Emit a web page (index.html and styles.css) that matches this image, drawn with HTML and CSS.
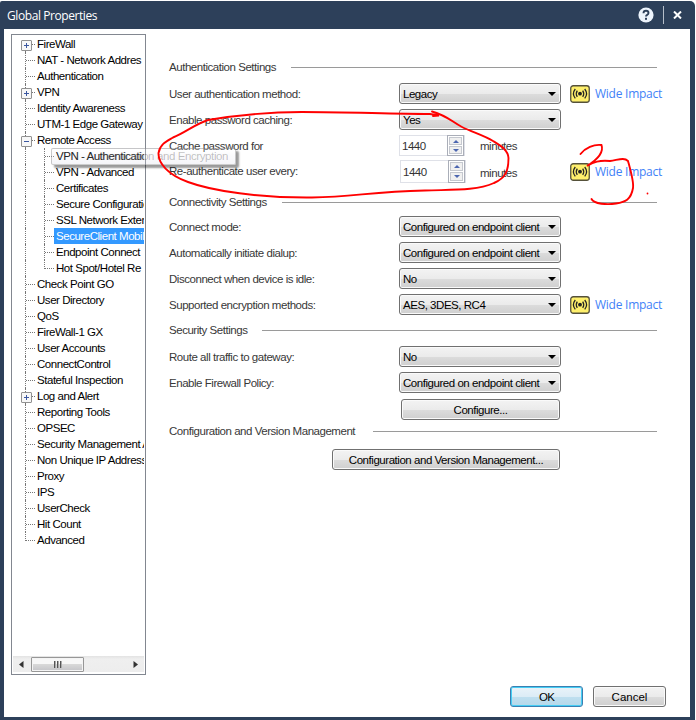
FILE: index.html
```
<!DOCTYPE html>
<html lang="en">
<head>
<meta charset="utf-8">
<title>Global Properties</title>
<link rel="stylesheet" href="styles.css">
</head>
<body>
<svg width="0" height="0" class="defs">
  <symbol id="wide" viewBox="0 0 20 18">
    <rect x=".75" y=".75" width="18.5" height="16.5" rx="2.5" fill="#fff06c" stroke="#55513a" stroke-width="1.3"/>
    <circle cx="10" cy="8.7" r="1.9" fill="#222"/>
    <path d="M7.3 5.6Q5.2 8.7 7.3 11.8M12.700 5.600Q14.800 8.700 12.700 11.800M5.300 4Q1.600 8.700 5.300 13.400M14.700 4Q18.400 8.700 14.700 13.400" fill="none" stroke="#222" stroke-width="1.25"/>
  </symbol>
</svg>
<div class="window">
  <header class="titlebar">
    <span class="title">Global Properties</span>
    <svg class="help" width="16" height="16" viewBox="0 0 16 16"><circle cx="8" cy="8" r="7.6" fill="#edf4fc"/><path d="M5.500 6.200Q5.500 3.800 8 3.800T10.500 6Q10.500 7.200 9.200 7.800Q8 8.400 8 9.600" fill="none" stroke="#2d405a" stroke-width="1.9"/><rect x="7" y="10.8" width="2" height="2" fill="#2d405a"/></svg>
    <span class="divider"></span>
    <svg class="close" width="9" height="8" viewBox="0 0 9 8"><path d="M1 .5L8 7.500M8 .5L1 7.500" stroke="#fff" stroke-width="2"/></svg>
  </header>
  <div class="body">
    <main class="content">
      <nav class="tree">
        <ul class="list">
          <li class="exp plus first">FireWall</li>
          <li>NAT - Network Addres</li>
          <li>Authentication</li>
          <li class="exp plus">VPN</li>
          <li>Identity Awareness</li>
          <li>UTM-1 Edge Gateway</li>
          <li class="exp">Remote Access</li>
          <li class="sub">VPN - Authentication</li>
          <li class="sub">VPN - Advanced</li>
          <li class="sub">Certificates</li>
          <li class="sub">Secure Configuration</li>
          <li class="sub">SSL Network Extender</li>
          <li class="sub selected"><span>SecureClient Mobile</span></li>
          <li class="sub">Endpoint Connect</li>
          <li class="sub end">Hot Spot/Hotel Re</li>
          <li>Check Point GO</li>
          <li>User Directory</li>
          <li>QoS</li>
          <li>FireWall-1 GX</li>
          <li>User Accounts</li>
          <li>ConnectControl</li>
          <li>Stateful Inspection</li>
          <li class="exp plus">Log and Alert</li>
          <li>Reporting Tools</li>
          <li>OPSEC</li>
          <li>Security Management A</li>
          <li>Non Unique IP Address</li>
          <li>Proxy</li>
          <li>IPS</li>
          <li>UserCheck</li>
          <li>Hit Count</li>
          <li class="last">Advanced</li>
        </ul>
        <div class="scrollbar">
          <svg width="5" height="7" viewBox="0 0 5 7"><path d="M4.500 0V7L0 3.500Z" fill="#333"/></svg>
          <span class="thumb"><i></i><i></i><i></i></span>
          <svg class="right" width="5" height="7" viewBox="0 0 5 7"><path d="M.5 0V7L5 3.500Z" fill="#333"/></svg>
        </div>
      </nav>
      <section class="form">
        <h2>Authentication Settings</h2>
        <div class="row"><label>User authentication method:</label><span class="select">Legacy</span><span class="impact"><svg width="20" height="18"><use href="#wide"/></svg>Wide Impact</span></div>
        <div class="row"><label>Enable password caching:</label><span class="select">Yes</span></div>
        <div class="row"><label>Cache password for</label><span class="spin">1440<span class="arrows"><b></b><b class="down"></b></span></span><span class="unit">minutes</span></div>
        <div class="row tall"><label>Re-authenticate user every:</label><span class="spin">1440<span class="arrows"><b></b><b class="down"></b></span></span><span class="unit">minutes</span><span class="impact"><svg width="20" height="18"><use href="#wide"/></svg>Wide Impact</span></div>
        <h2 class="h-conn">Connectivity Settings</h2>
        <div class="row"><label>Connect mode:</label><span class="select">Configured on endpoint client</span></div>
        <div class="row"><label>Automatically initiate dialup:</label><span class="select">Configured on endpoint client</span></div>
        <div class="row"><label>Disconnect when device is idle:</label><span class="select">No</span></div>
        <div class="row"><label>Supported encryption methods:</label><span class="select">AES, 3DES, RC4</span><span class="impact"><svg width="20" height="18"><use href="#wide"/></svg>Wide Impact</span></div>
        <h2 class="h-sec">Security Settings</h2>
        <div class="row"><label>Route all traffic to gateway:</label><span class="select">No</span></div>
        <div class="row"><label>Enable Firewall Policy:</label><span class="select">Configured on endpoint client</span></div>
        <div class="row right"><button class="configure">Configure...</button></div>
        <h2 class="h-conf">Configuration and Version Management</h2>
        <div class="row right"><button class="manage">Configuration and Version Management...</button></div>
      </section>
    </main>
    <footer class="footer"><button class="ok">OK</button><button>Cancel</button></footer>
  </div>
  <div class="tooltip">VPN - Authentication and Encryption</div>
  <svg class="ink" width="696" height="720" viewBox="0 0 696 720">
    <path d="M432 111.500C448 116 452 122 462 127S485 136 493 141S508 150 508.500 158C508.500 170 506 178 494 183C476 191 452 189.500 425 190.500C370 191.500 355 197 312 197.500C260 198 212 191 188 182C168 175 158 163 158.500 153C160 144 167 141 173 137.500C185 133 195 124 208 120C232 116 262 112 302 112C350 112 390 114 430 114L439 115.500L433 116"/>
    <path d="M580.500 154C585 148 594 144 601.500 145C603.500 151 600 158 587 166C594 162 599 160 610 161C618 160 624 157 628 161C631 172 634 182 633 188C631 200 625 202 616 203.500C607 205 594 204 591.500 199"/>
    <circle class="dot" cx="647.5" cy="193.5" r=".9"/>
  </svg>
</div>
</body>
</html>
```
FILE: styles.css
```
* { box-sizing: border-box; }
body { margin: 0; background: #fff; font: 11.5px/16px "Liberation Sans", sans-serif; letter-spacing: -0.46px; color: #000; }
.defs { position: absolute; }
.window { position: relative; width: 696px; height: 720px; padding: 1px 1px 0 0; overflow: hidden; }
.titlebar { display: flex; align-items: center; height: 28px; padding: 0 13px 0 7px; background: #2d405a; border-radius: 2px 5px 0 0; color: #fff; }
.title { flex: 1; font: 12px/16px "Open Sans", sans-serif; letter-spacing: -0.42px; padding-top: 1px; }
.help { margin-right: 9px; }
.divider { width: 1px; height: 18px; margin: 0 9px 0 0; background: #b5bec9; }
.body { height: 691px; padding: 0 5px 3px 4px; background: #2d405a; }
.content { display: flex; height: 649px; padding: 5px 0 0 7px; background: #fff; }
.tree { display: flex; flex-direction: column; width: 135px; height: 641px; border: 1px solid #828790; padding: 1px; overflow: hidden; }
.list { flex: 1; margin: 0; padding: 0; list-style: none; overflow: hidden; }
.list li { position: relative; height: 16px; padding-left: 24px; white-space: nowrap; }
.list li::before { content: ""; position: absolute; left: 12px; top: 0; width: 9px; height: 16px; border-left: 1px dotted #777; background: linear-gradient(90deg, #777 50%, transparent 50%) 0 8px / 2px 1px repeat-x; }
.list .first::before { top: 8px; height: 8px; background-position: 0 0; }
.list .last::before { height: 9px; }
.list .exp::after { content: ""; position: absolute; left: 8px; top: 4px; width: 9px; height: 9px; border: 1px solid #919191; border-radius: 1px; background: linear-gradient(#3b57a0, #3b57a0) center / 5px 1px no-repeat, #f7f7f7; }
.list .plus::after { background: linear-gradient(#3b57a0, #3b57a0) center / 5px 1px no-repeat, linear-gradient(#3b57a0, #3b57a0) center / 1px 5px no-repeat, #f7f7f7; }
.list .sub { padding-left: 43px; }
.list .sub::before { background: none; }
.list .sub::after { content: ""; position: absolute; left: 31px; top: 0; width: 9px; height: 16px; border-left: 1px dotted #777; background: linear-gradient(90deg, #777 50%, transparent 50%) 0 8px / 2px 1px repeat-x; }
.list .end::after { height: 9px; }
.selected span { display: block; margin-left: -2px; padding-left: 2px; background: #3399ff; color: #fff; overflow: hidden; }
.scrollbar { display: flex; align-items: center; height: 16px; margin-bottom: 1px; padding: 0 6px; background: linear-gradient(#e3e3e3, #efefef 20%, #ededed); }
.thumb { display: flex; align-items: center; justify-content: center; gap: 1px; width: 53px; height: 15px; margin-left: 7px; border: 1px solid #979797; border-radius: 1px; background: linear-gradient(#f7f7f7 45%, #d8d8d8 50%, #c4c4c8); box-shadow: inset 0 0 0 1px #f4f4f4; }
.thumb i { width: 2px; height: 7px; border-left: 1px solid #555; border-right: 1px solid #aaa; }
.scrollbar .right { margin-left: auto; }
.form { width: 530px; padding: 25px 0 0 23px; color: #383838; }
h2 { display: flex; align-items: center; width: 488px; height: 16px; margin: 0 0 6px; font-size: inherit; font-weight: normal; }
h2::after { content: ""; flex: 1; height: 1px; margin-left: 15px; background: #9a9a9a; }
.h-conn { margin: 9px 0 4px; }
.h-sec { margin: 4px 0 6px; }
.h-conf { margin: 1px 0 8px; }
.h-conf::after { margin-left: 18px; }
.row { display: flex; align-items: center; height: 26px; padding-bottom: 1px; white-space: nowrap; }
.row > * { flex: none; }
.row label { width: 230px; }
.select { display: flex; align-items: center; width: 162px; height: 21px; padding: 0 4px 0 3px; border: 1px solid #707070; border-radius: 3px; background: linear-gradient(#f3f3f3, #ebebeb 50%, #dcdcdc 52%, #cfcfcf); box-shadow: inset 0 0 0 1px #fafafa; color: #000; }
.select::after { content: ""; flex: none; margin-left: auto; border: 4px solid transparent; border-top-color: #000; border-bottom: 0; }
.impact { display: flex; align-items: center; gap: 5px; margin-left: 9px; font: 12px/16px "Open Sans", sans-serif; letter-spacing: -0.25px; color: #3f82f7; }
.impact svg { flex: none; }
.spin { display: flex; align-items: center; width: 66px; height: 21px; border: 1px solid #dfe1e8; padding-left: 2px; color: #333; }
.arrows { display: flex; flex-direction: column; gap: 1px; width: 17px; height: 21px; margin-left: auto; padding: 1px; border: 1px solid #aaaeb8; }
.arrows b { display: flex; align-items: center; justify-content: center; flex: 1; border: 1px solid #c5c8cf; background: #f0f0f0; }
.arrows b::after { content: ""; border: 3px solid transparent; border-bottom-color: #4c66b0; border-top: 0; }
.arrows .down::after { border: 3px solid transparent; border-top-color: #4c66b0; border-bottom: 0; }
.unit { width: 82px; padding-left: 15px; }
.tall label { padding-bottom: 2px; }
.tall .spin { width: 66px; margin-left: 1px; height: 23px; }
.tall .arrows { height: 23px; }
.tall .unit { padding-left: 14px; padding-top: 3px; }
.tall .impact { margin-left: 22px; }
.right.row { justify-content: flex-end; padding-right: 116px; }
button { height: 21px; width: 73px; padding: 0; border: 1px solid #707070; border-radius: 3px; background: linear-gradient(#f3f3f3, #ebebeb 50%, #dcdcdc 52%, #cfcfcf); box-shadow: inset 0 0 0 1px #fafafa; font: inherit; letter-spacing: inherit; color: #000; }
.configure { width: 159px; margin-top: 2px; }
.manage { width: 228px; }
.footer { display: flex; justify-content: flex-end; gap: 10px; height: 39px; padding: 8px 24px 0 0; background: #fff; }
.footer button { letter-spacing: 0; }
.footer .ok { border-color: #3c7fb1; background: linear-gradient(#eaf3f9, #dcecf6 50%, #bfdfef 52%, #b5d8ea); box-shadow: inset 0 0 0 1px #45cef5; letter-spacing: -0.8px; }
.tooltip { position: absolute; left: 51px; top: 148px; width: 185px; height: 17px; padding-left: 4px; border: 1px solid rgba(110,110,110,.35); border-radius: 2px; background: linear-gradient(rgba(255,255,255,.2), rgba(215,215,230,.25)); box-shadow: 3px 3px 2px rgba(0,0,0,.4); color: rgba(0,0,0,.25); letter-spacing: -0.4px; line-height: 15px; white-space: nowrap; }
.ink { position: absolute; left: 0; top: 0; fill: none; stroke: #f00; stroke-width: 1.9; stroke-linecap: round; }
.dot { fill: #f00; stroke: none; }
```
